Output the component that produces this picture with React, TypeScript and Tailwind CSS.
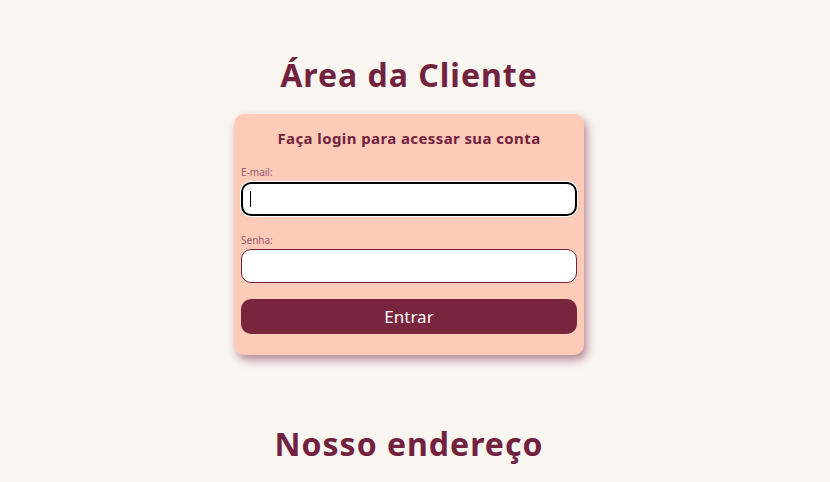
export default function App() {
  return (
    <div className="min-h-[482px] bg-[#f9f5f1] pr-[12px] font-['Noto_Sans',sans-serif] text-[#72223f] flex flex-col items-center">
      <h1 className="mt-[53px] text-[32px] leading-[44px] font-bold tracking-[1px]">Área da Cliente</h1>

      {/* Card de login */}
      <form
        onSubmit={(e) => e.preventDefault()}
        className="mt-[17px] w-[350px] rounded-[10px] bg-[#ffcbb9] px-[7px] pt-[13px] pb-[21px] shadow-[3px_5px_8px_rgba(114,34,63,0.5)]"
      >
        <h2 className="text-center text-[15px] leading-[22px] font-bold tracking-[0.4px]">Faça login para acessar sua conta</h2>

        <label className="mt-[17px] block text-[10px] leading-[12px] text-[#95566a]">E-mail:</label>
        <div className="relative mt-[4px]">
          <input
            type="email"
            className="block h-[34px] w-full rounded-[10px] border-2 border-black bg-white outline-none ring-1 ring-white"
          />
          <span className="absolute left-[9px] top-[9px] h-[16px] w-px bg-black" />
        </div>

        <label className="mt-[18px] block text-[10px] leading-[12px] text-[#95566a]">Senha:</label>
        <input
          type="password"
          className="mt-[3px] block h-[34px] w-full rounded-[10px] border border-[#72223f] bg-white outline-none"
        />

        <button
          type="submit"
          className="mt-[16px] h-[35px] w-full rounded-[10px] bg-[#79253e] text-[17px] text-white"
        >
          Entrar
        </button>
      </form>

      <h2 className="mt-[67px] text-[32px] leading-[44px] font-bold tracking-[1px]">Nosso endereço</h2>
    </div>
  );
}
